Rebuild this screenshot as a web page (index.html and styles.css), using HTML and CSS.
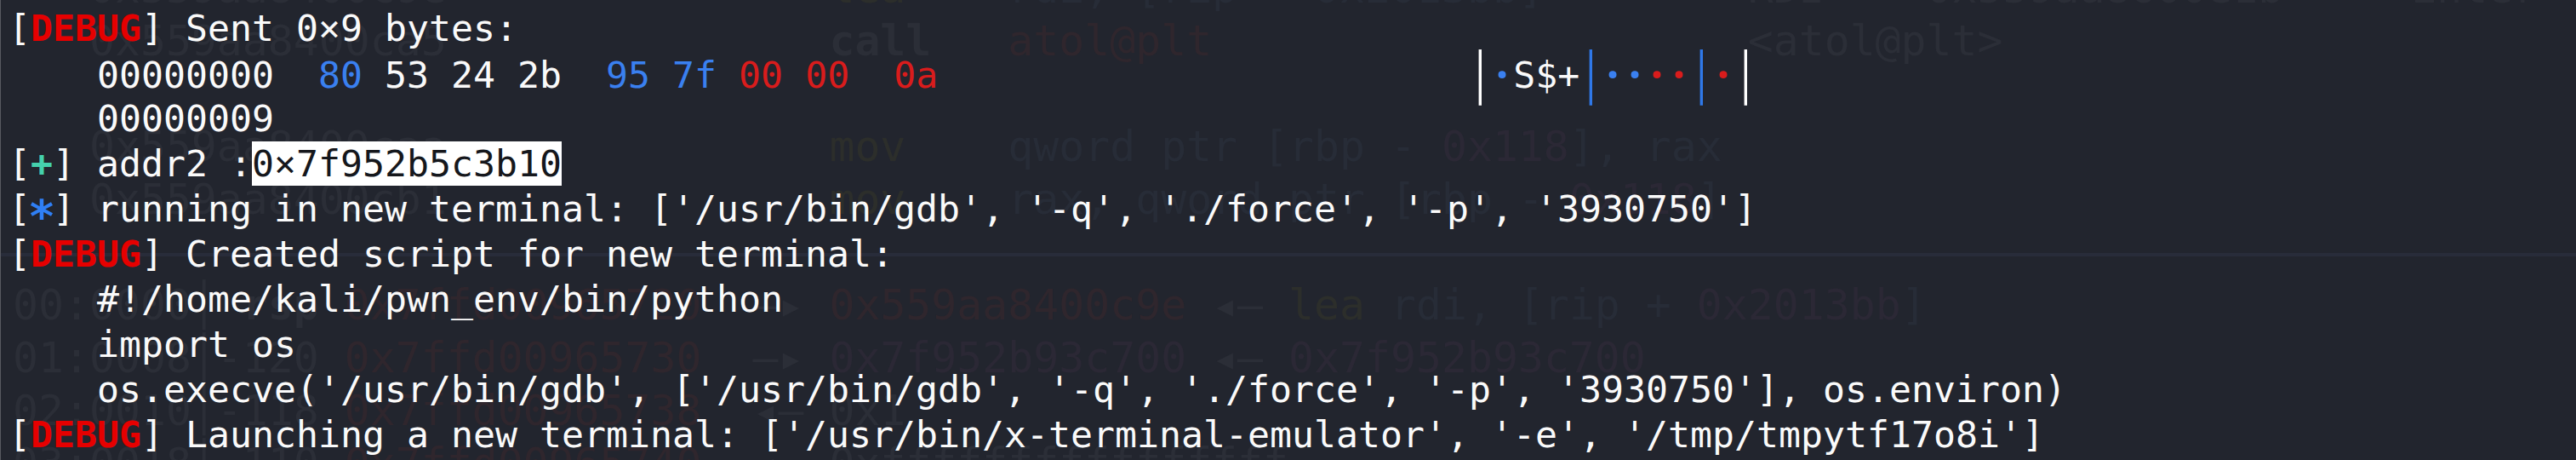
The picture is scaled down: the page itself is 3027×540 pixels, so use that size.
FILE: index.html
```html
<!DOCTYPE html>
<html>
<head>
<meta charset="utf-8">
<link rel="stylesheet" href="styles.css">
</head>
<body>
<div class="term">
  <div class="ghost">
    <div class="grow">   <span class="g-gray">0x559aa8400c9e</span>               <span class="g-yel">lea</span>    <span class="g-blue">rdi, [rip + 0x2013bb]</span>        <span class="g-gray">RDI =&gt; 0x559aa8600e1b ◂— 'Enter (no</span></div>
    <div class="grow">   <span class="g-gray">0x559aa8400ca5</span>               <span class="g-gray g-b">call</span>   <span class="g-red">atol@plt</span>                     <span class="g-gray">&lt;atol@plt&gt;</span></div>
    <div class="grow"> </div>
    <div class="grow">   <span class="g-gray">0x559aa8400caa</span>               <span class="g-yel">mov</span>    <span class="g-blue">qword ptr [rbp - </span><span class="g-pur">0x118</span><span class="g-blue">], rax</span></div>
    <div class="grow">   <span class="g-gray">0x559aa8400cb1</span>               <span class="g-yel">mov</span>    <span class="g-blue">rax, qword ptr [rbp - </span><span class="g-pur">0x118</span><span class="g-blue">]</span></div>
    <div class="grow sep"> </div>
    <div class="grow"><span class="g-gray">00:0000│</span> <span class="g-gray g-b">rsp</span> <span class="g-red">0x7ffd00965720</span>  <span class="g-gray">—▸</span> <span class="g-red">0x559aa8400c9e</span> <span class="g-gray">◂—</span> <span class="g-yel">lea</span> <span class="g-blue">rdi, [rip + </span><span class="g-pur">0x2013bb</span><span class="g-blue">]</span></div>
    <div class="grow"><span class="g-gray">01:0008│-120</span> <span class="g-red">0x7ffd00965730</span>  <span class="g-gray">—▸</span> <span class="g-pur">0x7f952b93c700</span> <span class="g-gray">◂—</span> <span class="g-pur">0x7f952b93c700</span></div>
    <div class="grow"><span class="g-gray">02:0010│-118</span> <span class="g-red">0x7ffd00965738</span>  <span class="g-gray">◂—</span> <span class="g-gray">0x1</span></div>
    <div class="grow"><span class="g-gray">03:0018│-110</span> <span class="g-red">0x7ffd00965740</span>  <span class="g-gray">◂—</span> <span class="g-gray">0xffffffffffffffff</span></div>
  </div>
  <div class="lines">
    <div class="line">[<span class="dbg">DEBUG</span>] Sent 0×9 bytes:</div>
    <div class="line">    00000000  <span class="hb">80</span> 53 24 2b  <span class="hb">95</span> <span class="hb">7f</span> <span class="hr">00</span> <span class="hr">00</span>  <span class="hr">0a</span>                        <span class="bar">│</span><span class="hb dot">·</span>S$+<span class="bar bar-b">│</span><span class="hb dot">·</span><span class="hb dot">·</span><span class="hr dot">·</span><span class="hr dot">·</span><span class="bar bar-b">│</span><span class="hr dot">·</span><span class="bar">│</span></div>
    <div class="line">    00000009</div>
    <div class="line">[<span class="plus">+</span>] addr2 :<span class="sel">0×7f952b5c3b10</span></div>
    <div class="line">[<span class="star">*</span>] running in new terminal: ['/usr/bin/gdb', '-q', './force', '-p', '3930750']</div>
    <div class="line">[<span class="dbg">DEBUG</span>] Created script for new terminal:</div>
    <div class="line">    #!/home/kali/pwn_env/bin/python</div>
    <div class="line">    import os</div>
    <div class="line">    os.execve('/usr/bin/gdb', ['/usr/bin/gdb', '-q', './force', '-p', '3930750'], os.environ)</div>
    <div class="line">[<span class="dbg">DEBUG</span>] Launching a new terminal: ['/usr/bin/x-terminal-emulator', '-e', '/tmp/tmpytf17o8i']</div>
  </div>
</div>
</body>
</html>
```

FILE: styles.css
```css
html, body {
  margin: 0;
  padding: 0;
  background: #22252e;
}

.term {
  position: relative;
  width: 3027px;
  height: 540px;
  overflow: hidden;
  background: #22252e;
  border-left: 1px solid #575960;
  box-sizing: border-box;
  font-family: "DejaVu Sans Mono", "Liberation Mono", monospace;
}

.ghost {
  position: absolute;
  top: -45px;
  left: 14px;
  right: 0;
  font-size: 49.8px;
  line-height: 62px;
  color: #2b2e37;
}

.grow {
  height: 62px;
  white-space: pre;
}

.sep {
  background: linear-gradient(to bottom, transparent 32px, #282c3a 32px, #282c3a 36px, transparent 36px);
  margin-left: -14px;
}

.g-gray { color: #2b2e37; }
.g-red { color: #2f262d; }
.g-yel { color: #2c2e2b; }
.g-blue { color: #272c37; }
.g-pur { color: #2b2835; }
.g-b { font-weight: bold; }

.lines {
  position: relative;
  padding: 7px 0 0 9px;
  font-size: 43.2px;
  line-height: 53px;
  color: #fafafa;
}

.line {
  height: 53px;
  white-space: pre;
}

.dbg {
  color: #e60000;
  font-weight: bold;
}

.plus {
  color: #45d1ad;
  font-weight: bold;
}

.star {
  display: inline-block;
  color: #2f7ff5;
  font-weight: bold;
  transform: translateY(9px) scale(1.25);
}

.hb { color: #3a80f0; }
.hr { color: #d91c1c; }

.dot {
  display: inline-block;
  width: 26px;
  text-align: center;
  font-family: "Noto Sans", "DejaVu Sans", sans-serif;
  font-weight: bold;
  transform: scale(1.2);
}

.bar {
  display: inline-block;
  transform: translateY(3px) scaleY(1.28);
  color: #ffffff;
}

.bar-b {
  color: #2f78e8;
}

.sel {
  display: inline-block;
  line-height: 52px;
  background: #ffffff;
  color: #15171c;
}
```
